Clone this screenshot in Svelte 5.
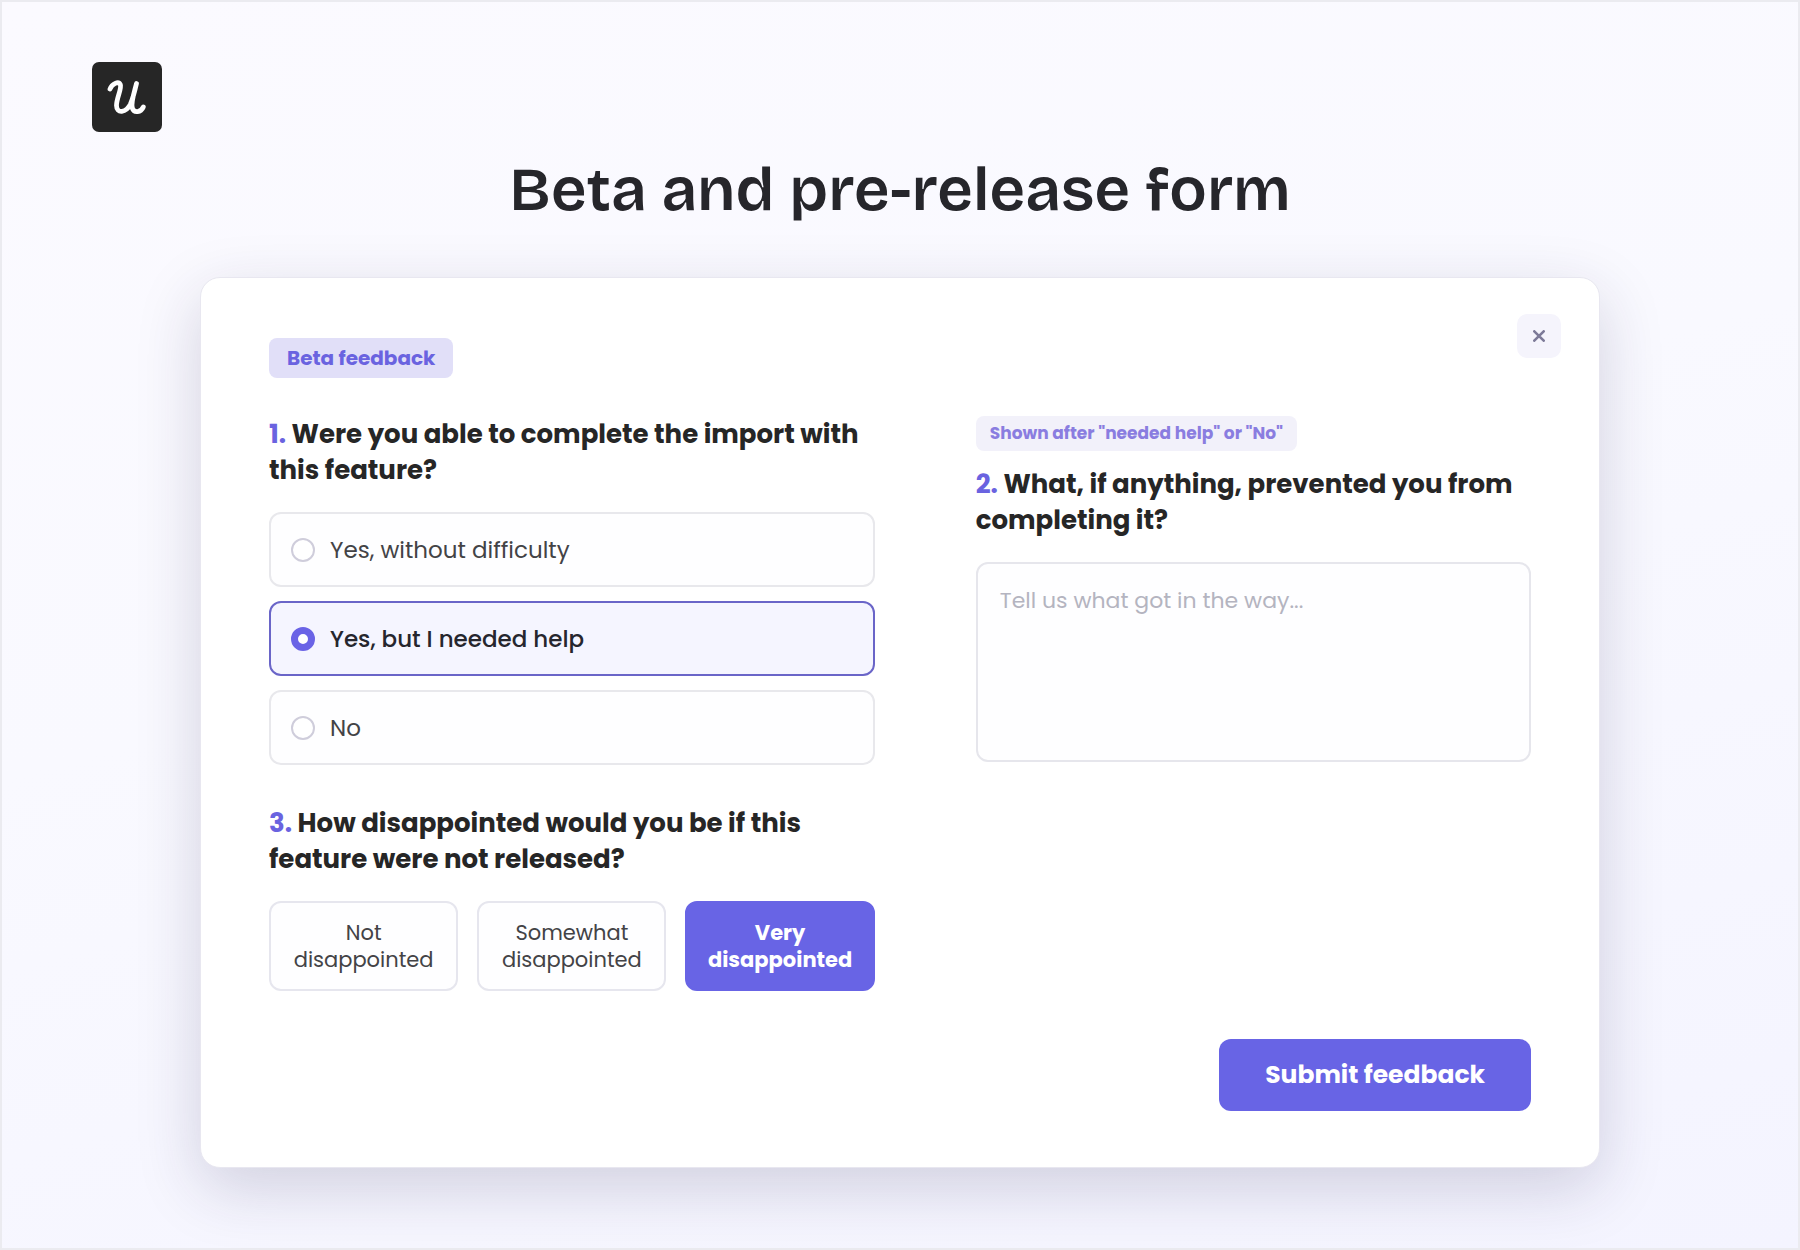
<script lang="ts">
  const outcomes = ['Yes, without difficulty', 'Yes, but I needed help', 'No'];
  const levels = ['Not', 'Somewhat', 'Very'];

  let outcome = $state('Yes, but I needed help');
  let level = $state('Very');
  let reason = $state('');
  let open = $state(true);

  function handleSubmit(e: SubmitEvent) {
    e.preventDefault();
  }
</script>

<main class="page">
  <svg class="logo" viewBox="0 0 70 70" role="img" aria-label="Logo">
    <rect width="70" height="70" rx="7" fill="#262626" />
    <path
      d="M18 27 C20 21.500 26.500 19 28.300 22.500 C30 26.500 24.500 36 24.500 43.500 C24.500 52 34 51 38.500 42 C41 36 43 28 44.500 21.500 C42 31 38.800 40 40.300 46 C42 51.500 49 50.500 51.300 45"
      fill="none"
      stroke="#fff"
      stroke-width="4.800"
      stroke-linecap="round"
      stroke-linejoin="round"
    />
  </svg>

  <h1>Beta and pre-release form</h1>

  {#if open}
    <form class="card" onsubmit={handleSubmit}>
      <button type="button" class="close" aria-label="Close" onclick={() => (open = false)}>
        <svg viewBox="0 0 12 12" width="12" height="12" aria-hidden="true">
          <path d="M1.300 1.300 L10.700 10.700 M10.700 1.300 L1.300 10.700" stroke="#7d7a98" stroke-width="2.600" stroke-linecap="round" />
        </svg>
      </button>

      <span class="tag">Beta feedback</span>

      <div class="columns">
        <div class="column">
          <h2 id="q1"><span class="number">1.</span> Were you able to complete the import with this feature?</h2>
          <div class="options" role="radiogroup" aria-labelledby="q1">
            {#each outcomes as item}
              <label class="option" class:selected={outcome === item}>
                <input type="radio" name="outcome" value={item} bind:group={outcome} />
                <span>{item}</span>
              </label>
            {/each}
          </div>

          <h2 class="spaced" id="q3"><span class="number">3.</span> How disappointed would you be if this feature were not released?</h2>
          <div class="scale" role="group" aria-labelledby="q3">
            {#each levels as item}
              <button
                type="button"
                class="level"
                class:active={level === item}
                aria-pressed={level === item}
                onclick={() => (level = item)}
              >
                {item}<br />disappointed
              </button>
            {/each}
          </div>
        </div>

        <div class="column">
          <span class="condition">Shown after "needed help" or "No"</span>
          <h2><label for="reason"><span class="number">2.</span> What, if anything, prevented you from completing it?</label></h2>
          <textarea id="reason" placeholder="Tell us what got in the way..." bind:value={reason}></textarea>
        </div>
      </div>

      <div class="actions">
        <button type="submit" class="submit">Submit feedback</button>
      </div>
    </form>
  {/if}
</main>

<style>
  :global(body) {
    margin: 0;
  }

  .page {
    box-sizing: border-box;
    min-height: 100vh;
    padding: 60px 90px 80px;
    border: 2px solid #ebebf0;
    background: linear-gradient(165deg, #fbfaff 0%, #f9f9ff 45%, #f4f4ff 100%);
    font-family: Poppins, Inter, sans-serif;
    color: #262626;
  }

  .logo {
    display: block;
    width: 70px;
    height: 70px;
  }

  h1 {
    margin: 18px 0 47px;
    font-family: "Bricolage Grotesque", Inter, sans-serif;
    font-size: 62px;
    font-weight: 600;
    line-height: 80px;
    text-align: center;
    color: #26262b;
  }

  .card {
    position: relative;
    margin: 0 108px;
    padding: 60px 68px 56px;
    border: 1px solid #e8e7f0;
    border-radius: 20px;
    background: #fff;
    box-shadow: 0 20px 64px rgba(38, 32, 80, 0.18);
  }

  .close {
    position: absolute;
    top: 36px;
    right: 38px;
    display: flex;
    align-items: center;
    justify-content: center;
    width: 44px;
    height: 44px;
    padding: 0;
    border: none;
    border-radius: 10px;
    background: #f5f4fc;
    cursor: pointer;
  }

  .tag,
  .condition {
    display: block;
    width: fit-content;
    font-weight: 700;
  }

  .tag {
    padding: 0 18px;
    border-radius: 8px;
    background: #e1dff8;
    color: #6a63e0;
    font-size: 20px;
    line-height: 40px;
  }

  .columns {
    display: grid;
    grid-template-columns: 12fr 11fr;
    gap: 101px;
    margin-top: 38px;
  }

  .condition {
    margin-bottom: 15px;
    padding: 0 14px;
    border-radius: 8px;
    background: #f2f1fa;
    color: #8a7de0;
    font-size: 17px;
    line-height: 35px;
  }

  h2 {
    margin: 0 0 24px;
    font-size: 26px;
    font-weight: 700;
    line-height: 36px;
  }

  h2.spaced {
    margin-top: 40px;
  }

  .number {
    color: #6a63e0;
  }

  .options {
    display: flex;
    flex-direction: column;
    gap: 14px;
  }

  .option {
    display: flex;
    align-items: center;
    gap: 15px;
    box-sizing: border-box;
    height: 75px;
    padding: 0 20px;
    border: 2px solid #e8e8ec;
    border-radius: 12px;
    background: #fefeff;
    color: #434346;
    font-size: 23px;
    cursor: pointer;
  }

  .option.selected {
    border-color: #6a65c8;
    background: #f5f5ff;
    color: #26262e;
    font-weight: 500;
  }

  .option input {
    appearance: none;
    box-sizing: border-box;
    width: 24px;
    height: 24px;
    margin: 0;
    border: 2px solid #cfcddb;
    border-radius: 50%;
    background: #fff;
  }

  .option input:checked {
    border: 7px solid #6a63e6;
  }

  .scale {
    display: grid;
    grid-template-columns: repeat(3, 1fr);
    gap: 19px;
  }

  .level {
    height: 90px;
    padding: 0;
    border: 2px solid #e6e6ee;
    border-radius: 12px;
    background: #fefeff;
    color: #434346;
    font-family: inherit;
    font-size: 21px;
    line-height: 27px;
    cursor: pointer;
  }

  .level.active {
    border-color: #6864e5;
    background: #6864e5;
    color: #fff;
    font-weight: 700;
  }

  textarea {
    display: block;
    box-sizing: border-box;
    width: 100%;
    height: 200px;
    padding: 20px 22px;
    border: 2px solid #e6e6ec;
    border-radius: 12px;
    background: #fefeff;
    color: #262626;
    font-family: inherit;
    font-size: 22px;
    line-height: 34px;
    resize: none;
  }

  textarea::placeholder {
    color: #b4b4c0;
    opacity: 1;
  }

  .actions {
    display: flex;
    justify-content: flex-end;
    margin-top: 48px;
  }

  .submit {
    height: 72px;
    padding: 0 46px;
    border: none;
    border-radius: 12px;
    background: #6864e5;
    color: #fff;
    font-family: inherit;
    font-size: 25px;
    font-weight: 700;
    cursor: pointer;
  }
</style>
